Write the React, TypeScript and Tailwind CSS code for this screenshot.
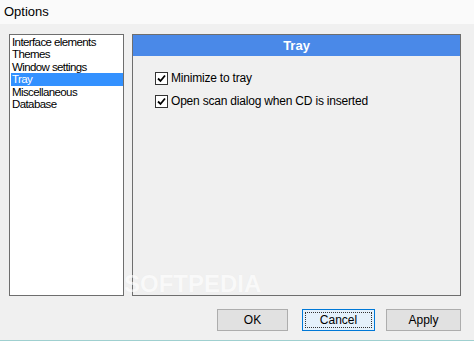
import React from "react";

const items = [
  "Interface elements",
  "Themes",
  "Window settings",
  "Tray",
  "Miscellaneous",
  "Database",
];

function Check() {
  return (
    <div className="w-[13px] h-[13px] border border-[#333333] bg-white flex items-center justify-center shrink-0">
      <svg width="9" height="9" viewBox="0 0 9 9">
        <path d="M1 4.5 L3.5 7 L8 1.5" fill="none" stroke="#000" strokeWidth="1.8" />
      </svg>
    </div>
  );
}

export default function App() {
  return (
    <div
      className="relative w-[474px] h-[341px] bg-[#f0f0f0] flex flex-col text-black overflow-hidden"
      style={{ fontFamily: '"Liberation Sans", Arial, sans-serif' }}
    >
      <div className="h-[24px] bg-[#fafafa] pl-[4px] pt-[4px] text-[13px] leading-[15px]">Options</div>
      <div className="flex pl-[9px] pt-[10px] gap-[8px]">
        <div className="w-[115px] h-[262px] bg-white border border-[#6e6e6e] pt-[1px] pl-[1px]">
          {items.map((t) => (
            <div
              key={t}
              className={
                "h-[12.4px] text-[11.5px] tracking-[-0.6px] leading-[12.4px] pl-[1px] whitespace-nowrap " +
                (t === "Tray" ? "bg-[#3391ff] text-white" : "")
              }
            >
              {t}
            </div>
          ))}
        </div>
        <div className="w-[329px] h-[262px] border border-[#6e6e6e] bg-[#f0f0f0] flex flex-col">
          <div className="h-[21px] bg-[#4a89e8] text-white font-bold text-[13px] leading-[21px] text-center">
            Tray
          </div>
          <div className="flex flex-col gap-[10px] pl-[22px] pt-[16px] text-[12px] tracking-[-0.2px]">
            <div className="flex items-center gap-[3px] h-[13px]">
              <Check />
              <span className="leading-[13px]">Minimize to tray</span>
            </div>
            <div className="flex items-center gap-[3px] h-[13px]">
              <Check />
              <span className="leading-[13px]">Open scan dialog when CD is inserted</span>
            </div>
          </div>
        </div>
      </div>
      <div className="flex justify-end pr-[13px] pt-[13px] text-[12px]">
        <div className="w-[71px] h-[22px] bg-[#e1e1e1] border border-[#adadad] flex items-center justify-center">OK</div>
        <div className="ml-[14px] w-[73px] h-[22px] bg-[#e5f1fb] border border-[#0078d7] p-[2px]">
          <div className="w-full h-full border border-dotted border-[#333333] flex items-center justify-center">Cancel</div>
        </div>
        <div className="ml-[11px] w-[75px] h-[22px] bg-[#e1e1e1] border border-[#adadad] flex items-center justify-center">Apply</div>
      </div>
      <div
        className="absolute left-[124px] top-[270px] text-[24px] leading-[28px] font-bold text-white opacity-60 pointer-events-none"
        style={{ textShadow: "0 0 1px rgba(0,0,0,0.05)" }}
      >
        SOFTPEDIA
      </div>
      <div className="absolute left-0 bottom-0 w-full h-[1px] bg-[#9fd0d0]"></div>
    </div>
  );
}
